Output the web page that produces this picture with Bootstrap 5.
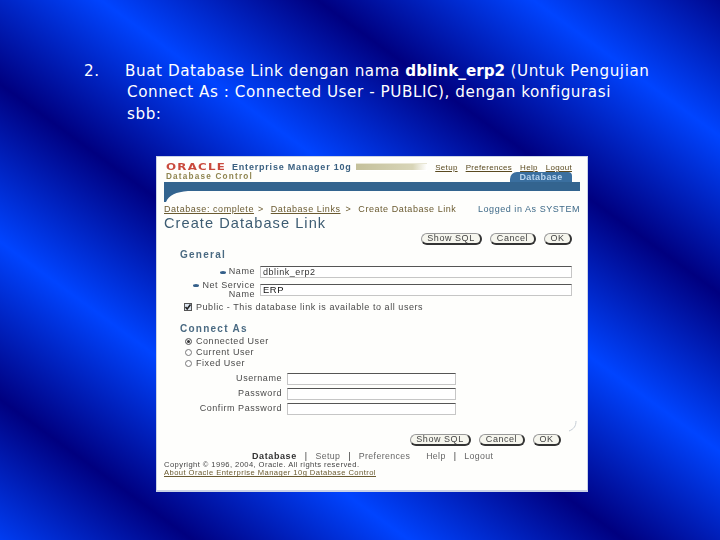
<!DOCTYPE html>
<html lang="id">
<head>
<meta charset="utf-8">
<title>Database Link</title>
<link href="https://cdn.jsdelivr.net/npm/bootstrap@5.3.0/dist/css/bootstrap.min.css" rel="stylesheet">
<style>
html,body{margin:0;height:100%;}
body{background:#000080;}
.slide{width:720px;height:540px;overflow:hidden;color:#fff;padding-top:61px;
 background:repeating-linear-gradient(36.1deg,#0044ff -13.75px,#000080 113.6px,#0044ff 241px);
 font-family:"DejaVu Sans",sans-serif;}
.headline{font-size:15.2px;line-height:21.3px;letter-spacing:.55px;padding-left:84px;}
.headline b{letter-spacing:0;}
.num{width:41px;flex:none;}
.body-text{width:540px;}
.cont{padding-left:2px;display:block;}
.shot{width:432px;height:336px;margin:31px 0 0 156px;background:#fefefc;border:solid #c9d2e6;border-width:1px 1px 2px 1px;
 font-family:"Liberation Sans",sans-serif;color:#4a4a4a;font-size:9px;letter-spacing:.55px;line-height:9px;padding:6px 7px 0 7px;}
.shot>*{filter:blur(.42px);}
.head-a{height:9px;}
.oracle{width:68px;padding-left:2px;flex:none;}
.oracle span{display:inline-block;color:#c9493c;font-family:"DejaVu Sans",sans-serif;font-weight:700;font-size:8.6px;letter-spacing:.9px;transform:scaleX(1.38);transform-origin:left center;}
.em{color:#3a6080;font-weight:700;font-size:9px;letter-spacing:.8px;width:124px;flex:none;white-space:nowrap;}
.tanbar{height:8px;width:71px;flex:none;background:linear-gradient(90deg,#c4c09a,#d8d5b8 80%,#fff);border-top:1px solid #e8e6d4;border-bottom:1px solid #fff;}
.toplinks{color:#5a4a20;gap:8px;text-decoration:underline;margin-left:auto;margin-right:8px;font-size:8px;letter-spacing:.3px;}
.head-b{height:10px;}
.dbc{color:#8f8550;font-weight:700;font-size:8.2px;letter-spacing:1.2px;padding-left:2px;}
.tab-db{width:62px;height:10px;background:#3a6f9f;color:#b8d4ee;border-radius:7px 4px 0 0;font-weight:700;text-align:center;line-height:10px;margin:0 8px 0 auto;letter-spacing:.4px;}
.bluebar{height:9px;background:#33648f;}
.swoosh{display:block;width:24px;height:11px;}
.crumbs{color:#6a5a30;margin-top:3px;height:9px;white-space:nowrap;}
.crumbs .sep{margin:0 7px 0 5px;}
.crumbs .sep-b{margin-left:4px;}
.logged{color:#3f6a88;margin-left:auto;}
.title-main{font-size:14.6px;line-height:16px;letter-spacing:1.05px;color:#3d5c72;margin-top:1px;height:16px;}
.pill{border:1px solid #999;border-right:2px solid #333;border-bottom:2px solid #333;border-radius:7px;height:12px;line-height:9px;text-align:center;background:#f6f6ee;color:#444;}
.actions{gap:8px;justify-content:flex-end;height:12px;}
.act-top{margin-top:2px;padding-right:8px;}
.act-bot{padding-right:19px;}
.w-sql{width:61px}.w-can{width:46px}.w-ok{width:28px}
.sect{color:#4a6a82;font-weight:700;font-size:10px;letter-spacing:1.25px;line-height:10px;height:10px;padding-left:16px;}
.sect-g{margin-top:5px;}
.sect-c{margin-top:12px;}
.lab{text-align:right;}
.lab-a{width:91px;margin-right:5px;flex:none;}
.lab-b{width:118px;margin-right:5px;flex:none;}
.frow{height:12px;align-items:center;}
.frow-a{margin-top:6px;margin-right:8px;}
.frow-b{margin-top:3px;}
.lab-two{margin-top:-3px;align-self:flex-start;}
.field{height:12px;border:1px solid #c6c6c6;border-top:1px solid #555;line-height:10px;padding-left:2px;color:#333;background:#fff;}
.w-cred{width:169px;flex:none;}
.erp{color:#111;font-size:9.4px;letter-spacing:.6px;}
.dot{display:inline-block;width:6px;height:3px;border-radius:50%;background:#35608a;vertical-align:middle;margin-right:3px;}
.chk-row{height:9px;margin-top:7px;align-items:center;}
.chk{display:block;width:8px;height:8px;flex:none;margin:0 4px 0 20px;}
.rad{width:7px;height:7px;border:1px solid #777;border-radius:50%;background:#fff;flex:none;margin:0 4px 0 21px;}
.rad.on{background:#333;box-shadow:inset 0 0 0 1px #fff;}
.rad-row{height:11px;align-items:center;}
.rad-first{margin-top:2.5px;}
.frow-c{margin-top:3.5px;}
.arc-row{height:19px;justify-content:flex-end;padding-right:2px;}
.arc{display:block;width:10px;height:19px;}
.foot-nav{color:#666;gap:8px;padding-left:88px;margin-top:6.5px;height:9px;white-space:nowrap;font-size:8.8px;letter-spacing:.35px;}
.foot-nav b{color:#333;font-size:9px;letter-spacing:.6px;}
.foot-nav .pipe{color:#333;}
.copy{line-height:8px;height:8px;color:#444;font-size:7.6px;letter-spacing:.42px;white-space:nowrap;}
.about{color:#6a5a30;text-decoration:underline;letter-spacing:.44px;}
</style>
</head>
<body>
<main class="slide">
  <div class="headline d-flex">
    <div class="num">2.</div>
    <div class="body-text">Buat Database Link dengan nama <b>dblink_erp2</b> (Untuk Pengujian<span class="cont">Connect As : Connected User - PUBLIC), dengan konfigurasi</span><span class="cont">sbb:</span></div>
  </div>
  <section class="shot">
    <div class="head-a d-flex">
      <div class="oracle"><span>ORACLE</span></div><div class="em">Enterprise Manager 10g</div><div class="tanbar"></div>
      <div class="toplinks d-flex"><span>Setup</span><span>Preferences</span><span>Help</span><span>Logout</span></div>
    </div>
    <div class="head-b d-flex">
      <div class="dbc">Database Control</div>
      <div class="tab-db">Database</div>
    </div>
    <div class="bluebar"></div>
    <svg class="swoosh" viewBox="0 0 24 11"><path d="M0 0H24C12 1 5 4 2 11H0Z" fill="#33648f"/></svg>
    <div class="crumbs d-flex"><u>Database: complete</u><span class="sep sep-b">&gt;</span><u>Database Links</u><span class="sep">&gt;</span><span>Create Database Link</span><span class="logged">Logged in As SYSTEM</span></div>
    <div class="title-main">Create Database Link</div>
    <div class="actions act-top d-flex"><div class="pill w-sql">Show SQL</div><div class="pill w-can">Cancel</div><div class="pill w-ok">OK</div></div>
    <div class="sect sect-g">General</div>
    <div class="d-flex frow frow-a"><div class="lab lab-a"><span class="dot"></span>Name</div><div class="field flex-grow-1">dblink_erp2</div></div>
    <div class="d-flex frow frow-a"><div class="lab lab-a lab-two"><span class="dot"></span>Net Service<br>Name</div><div class="field flex-grow-1 erp">ERP</div></div>
    <div class="d-flex chk-row"><svg class="chk" viewBox="0 0 8 8"><rect x=".5" y=".5" width="7" height="7" fill="#dbe4ee" stroke="#555"/><path d="M1.5 4L3.2 6L6.5 1.5" fill="none" stroke="#222" stroke-width="1.6"/></svg><span>Public - This database link is available to all users</span></div>
    <div class="sect sect-c">Connect As</div>
    <div class="d-flex rad-row rad-first"><span class="rad on"></span>Connected User</div>
    <div class="d-flex rad-row"><span class="rad"></span>Current User</div>
    <div class="d-flex rad-row"><span class="rad"></span>Fixed User</div>
    <div class="d-flex frow frow-c"><div class="lab lab-b">Username</div><div class="field w-cred"></div></div>
    <div class="d-flex frow frow-b"><div class="lab lab-b">Password</div><div class="field w-cred"></div></div>
    <div class="d-flex frow frow-b"><div class="lab lab-b">Confirm Password</div><div class="field w-cred"></div></div>
    <div class="d-flex arc-row"><svg class="arc" viewBox="0 0 10 19"><path d="M8 6C8 11 6 14 1 16" fill="none" stroke="#c4ccd4" stroke-width="1"/></svg></div>
    <div class="actions act-bot d-flex"><div class="pill w-sql">Show SQL</div><div class="pill w-can">Cancel</div><div class="pill w-ok">OK</div></div>
    <div class="foot-nav d-flex"><b>Database</b><span class="pipe">|</span><span>Setup</span><span class="pipe">|</span><span>Preferences</span><span class="ms-2">Help</span><span class="pipe">|</span><span>Logout</span></div>
    <div class="copy">Copyright &copy; 1996, 2004, Oracle. All rights reserved.</div>
    <div class="copy about">About Oracle Enterprise Manager 10g Database Control</div>
  </section>
</main>
</body>
</html>
